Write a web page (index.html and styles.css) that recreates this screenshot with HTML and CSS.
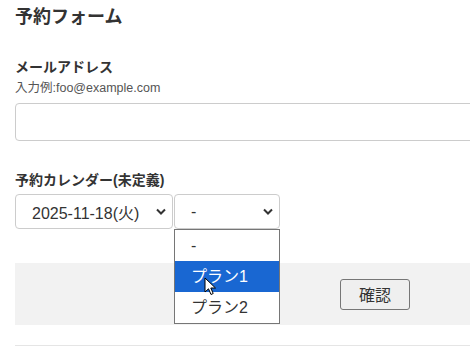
FILE: index.html
```html
<!DOCTYPE html>
<html lang="ja">
<head>
    <meta charset="UTF-8">
    <meta name="viewport" content="width=device-width, initial-scale=1.0">
    <title>予約フォーム</title>
    <link rel="stylesheet" href="styles.css">
</head>
<body>
    <div class="page">
        <h1>予約フォーム</h1>
        <form id="reserveForm">
            <div class="form-group">
                <label for="email">メールアドレス</label>
                <p class="hint">入力例:foo@example.com</p>
                <input type="email" id="email" name="email">
            </div>
            <div class="form-group calendar">
                <label for="date">予約カレンダー(未定義)</label>
                <div class="select-row">
                    <div class="fake-select date-select">
                        <span>2025-11-18(火)</span>
                        <svg class="chev" width="10" height="7" viewBox="0 0 10 7"><path d="M1 1.5 L5 5.5 L9 1.5" fill="none" stroke="#333" stroke-width="2"/></svg>
                    </div>
                    <div class="plan-wrap">
                        <div class="fake-select plan-select">
                            <span>-</span>
                            <svg class="chev" width="10" height="7" viewBox="0 0 10 7"><path d="M1 1.5 L5 5.5 L9 1.5" fill="none" stroke="#333" stroke-width="2"/></svg>
                        </div>
                        <ul class="dropdown">
                            <li>-</li>
                            <li class="active">プラン1</li>
                            <li>プラン2</li>
                        </ul>
                        <svg class="cursor" width="14" height="20" viewBox="0 0 14 20">
                            <path d="M1 1 L1 15 L4.5 11.8 L7 17.5 L9.2 16.5 L6.8 11 L11.5 11 Z" fill="#fff" stroke="#000" stroke-width="1" stroke-linejoin="round"/>
                        </svg>
                    </div>
                </div>
            </div>
            <div class="actions">
                <button type="submit">確認</button>
            </div>
        </form>
        <hr>
    </div>
</body>
</html>
```
FILE: styles.css
```css
body {
    margin: 0;
    font-family: "Liberation Sans", "Noto Sans CJK JP", sans-serif;
    color: #333;
    overflow: hidden;
}
.page {
    width: 720px;
    padding: 4px 0 0 15px;
}
h1 {
    font-size: 18px;
    line-height: 26px;
    margin: 0 0 27px;
    font-weight: bold;
}
.form-group {
    margin-bottom: 29px;
}
label {
    display: block;
    font-size: 14px;
    line-height: 20px;
    font-weight: bold;
}
.hint {
    margin: 3px 0 7px;
    font-size: 12.5px;
    line-height: 16px;
    color: #555;
}
input {
    display: block;
    width: 100%;
    height: 38px;
    box-sizing: border-box;
    border: 1px solid #ccc;
    border-radius: 4px;
    margin: 0;
}
.calendar {
    margin-bottom: 34px;
}
.select-row {
    display: flex;
    margin-top: 4px;
    gap: 1px;
}
.fake-select {
    display: flex;
    align-items: center;
    justify-content: space-between;
    box-sizing: border-box;
    height: 35px;
    border: 1px solid #ccc;
    border-radius: 4px;
    font-size: 16px;
    padding: 0 6px 0 16px;
    background: #fff;
}
.date-select {
    width: 158px;
}
.plan-select {
    width: 106px;
}
.plan-wrap {
    position: relative;
}
.dropdown {
    position: absolute;
    top: 35px;
    left: 0;
    width: 106px;
    box-sizing: border-box;
    margin: 0;
    padding: 0;
    list-style: none;
    border: 1px solid #767676;
    background: #fff;
    z-index: 2;
}
.dropdown li {
    height: 31px;
    line-height: 31px;
    padding-left: 16px;
    font-size: 16px;
    color: #333;
}
.dropdown li.active {
    background: #1967d2;
    color: #fff;
}
.cursor {
    position: absolute;
    left: 30px;
    top: 83px;
    z-index: 3;
}
.actions {
    background: #f2f2f2;
    height: 62px;
    display: flex;
    align-items: center;
    justify-content: center;
}
button {
    width: 70px;
    height: 31px;
    border: 1px solid #767676;
    border-radius: 3px;
    background: #efefef;
    color: #333;
    font-family: inherit;
    font-size: 16px;
    padding: 0;
}
hr {
    border: none;
    border-top: 1px solid #e5e5e5;
    margin: 20px 0 0;
}
```
